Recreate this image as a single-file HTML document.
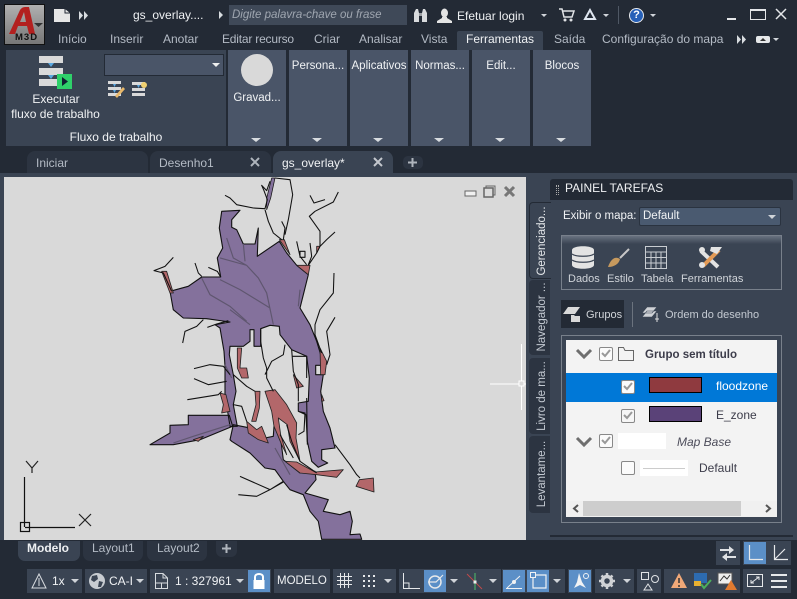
<!DOCTYPE html>
<html><head><meta charset="utf-8"><style>
html,body{margin:0;padding:0;width:797px;height:599px;overflow:hidden;background:#232a35}
body{position:relative;font-family:"Liberation Sans","DejaVu Sans",sans-serif;font-size:12px;color:#f0f2f4}
div{position:absolute;box-sizing:border-box}
.t{white-space:nowrap;line-height:16px;height:16px}
.g{color:#b4bbc5}
.m{left:0;top:0;width:797px;height:599px;background:#84719c}
.p{background:#4a5568;top:50px;height:96px;width:58px;text-align:center;font-size:11.5px}
.p .l{position:absolute;left:0;right:0;top:8px;line-height:16px;white-space:nowrap}
.p i{position:absolute;left:23px;bottom:4px;width:0;height:0;border-left:5px solid transparent;border-right:5px solid transparent;border-top:4px solid #d8dce0}
.s{background:#3a4453;top:569px;height:24px}
.b{background:#5b8fc7;top:570px;height:22px;width:22px}
svg{position:absolute;overflow:visible}
.a{position:absolute;width:0;height:0;border-left:4px solid transparent;border-right:4px solid transparent;border-top:4px solid #d0d4d9}
.v{transform:rotate(-90deg);transform-origin:center;text-align:center;width:78px;height:16px;line-height:16px;white-space:nowrap;color:#c4cad2;font-size:11.5px}
</style></head><body>

<!-- top chrome -->
<div style="left:4px;top:4px;width:41px;height:41px;background:linear-gradient(#b0b0b0,#777);border:1px solid #111"></div>
<svg style="left:4px;top:4px" width="41" height="41" viewBox="0 0 41 41"><path d="M5 30 L16 6 Q18 3 21 3 H25 L31 30 H25 L23 22 H14 L11 30 Z M16 18 H22 L20 8 Z" fill="#b3201f" fill-rule="evenodd"/><path d="M30 19 h9 l-4.500 4z" fill="#333"/></svg>
<div class="t" style="left:15px;top:31px;font-weight:bold;font-size:9.500px;color:#111;letter-spacing:1px;line-height:14px;height:14px">M3D</div>
<svg style="left:54px;top:9px" width="16" height="13"><path d="M0 0H11L16 4V13H0Z" fill="#e6e6e6"/><path d="M11 0V4H16" fill="none" stroke="#232a35"/></svg>
<svg style="left:79px;top:11px" width="10" height="9"><path d="M0 0L4 4.500 0 9ZM5 0L9 4.500 5 9Z" fill="#d8dce0"/></svg>
<div class="t" style="left:133px;top:7px">gs_overlay....</div>
<svg style="left:219px;top:11px" width="4" height="8"><path d="M0 0L4 4 0 8Z" fill="#d8dce0"/></svg>
<div style="left:229px;top:5px;width:178px;height:20px;background:#3f4958"></div>
<div class="t" style="left:232px;top:7px;font-style:italic;color:#a0a7b1;font-size:11.500px">Digite palavra-chave ou frase</div>
<svg style="left:413px;top:8px" width="15" height="15"><path d="M1 5L3 1H5L6 5V14H1ZM14 5L12 1H10L9 5V14H14Z" fill="#d9dbdd"/><rect x="6" y="5" width="3" height="3" fill="#9a9da1"/></svg>
<svg style="left:437px;top:8px" width="15" height="15"><ellipse cx="7.500" cy="5" rx="3.500" ry="4.500" fill="#e4e4e4"/><path d="M5 9h5v1l5 3v2H0v-2l5-3z" fill="#e4e4e4"/></svg>
<div class="t" style="left:457px;top:8px;color:#eef0f2">Efetuar login</div>
<div class="a" style="left:541px;top:14px;border-left-width:3px;border-right-width:3px;border-top-width:3px"></div>
<svg style="left:559px;top:8px" width="16" height="14"><path d="M0 1h3l2 8h8l2-6H4" fill="none" stroke="#e0e2e5" stroke-width="1.500"/><circle cx="6" cy="12" r="1.500" fill="#e0e2e5"/><circle cx="12" cy="12" r="1.500" fill="#e0e2e5"/></svg>
<svg style="left:583px;top:8px" width="14" height="13"><path d="M7 2L2 11H12Z" fill="none" stroke="#dfe6f0" stroke-width="2"/></svg>
<div class="a" style="left:603px;top:14px;border-left-width:3px;border-right-width:3px;border-top-width:3px"></div>
<div style="left:618px;top:6px;width:1px;height:18px;background:#4f5865"></div>
<div style="left:629px;top:8px;width:15px;height:15px;border-radius:50%;background:#e8eaed"></div>
<div style="left:630px;top:9px;width:13px;height:13px;border-radius:50%;background:#2660b8;color:#fff;font-weight:bold;text-align:center;line-height:13px;font-size:11px">?</div>
<div class="a" style="left:650px;top:14px;border-left-width:3px;border-right-width:3px;border-top-width:3px"></div>
<div style="left:727px;top:18px;width:9px;height:2px;background:#e4e6e9"></div>
<div style="left:750px;top:9px;width:16px;height:11px;border:1px solid #e4e6e9;border-top-width:2px"></div>
<svg style="left:775px;top:8px" width="12" height="12"><path d="M1 1L11 11M11 1L1 11" stroke="#e4e6e9" stroke-width="1.500"/></svg>

<!-- tabs -->
<div class="t g" style="left:58px;top:31px">Início</div>
<div class="t g" style="left:110px;top:31px">Inserir</div>
<div class="t g" style="left:163px;top:31px">Anotar</div>
<div class="t g" style="left:222px;top:31px;letter-spacing:-.2px">Editar recurso</div>
<div class="t g" style="left:314px;top:31px">Criar</div>
<div class="t g" style="left:359px;top:31px">Analisar</div>
<div class="t g" style="left:421px;top:31px">Vista</div>
<div style="left:457px;top:31px;width:86px;height:19px;background:#3a4453;border-radius:2px 2px 0 0"></div>
<div class="t" style="left:466px;top:31px">Ferramentas</div>
<div class="t g" style="left:554px;top:31px">Saída</div>
<div class="t g" style="left:602px;top:31px">Configuração do mapa</div>
<svg style="left:737px;top:35px" width="10" height="9"><path d="M0 0L4 4.500 0 9ZM5 0L9 4.500 5 9Z" fill="#d8dce0"/></svg>
<div style="left:756px;top:36px;width:14px;height:7px;background:#e6e8ea;border-radius:2px"></div>
<svg style="left:760px;top:37px" width="6" height="4"><path d="M0 4L3 1 6 4Z" fill="#333"/></svg>
<div class="a" style="left:773px;top:38px;border-left-width:3px;border-right-width:3px;border-top-width:3px"></div>

<!-- ribbon -->
<div style="left:6px;top:50px;width:220px;height:96px;background:#3a4453"></div>
<svg style="left:39px;top:56px" width="33" height="33"><path d="M0 0h24v7H0zM0 12h24v7H0zM0 23h24v7H0z" fill="#d9d9d9"/><path d="M9 7h6l-3 4zM9 19h6l-3 4z" fill="#5aa7e0"/><rect x="18" y="18" width="15" height="15" fill="#2fd16a"/><path d="M23 21l6 4.500-6 4.500z" fill="#123"/></svg>
<div class="t" style="left:0;top:91px;width:112px;text-align:center">Executar</div>
<div class="t" style="left:0;top:106px;width:111px;text-align:center">fluxo de trabalho</div>
<div class="t" style="left:6px;top:129px;width:220px;text-align:center">Fluxo de trabalho</div>
<div style="left:104px;top:54px;width:120px;height:22px;background:#4a5568;border:1px solid #232a35"></div>
<div class="a" style="left:212px;top:63px;border-top-color:#eee"></div>
<svg style="left:108px;top:81px" width="18" height="17"><path d="M0 0h13v3H0zM0 6h13v3H0zM0 12h13v3H0z" fill="#d9d9d9"/><path d="M5 3h3l-1.500 3zM5 9h3l-1.500 3z" fill="#5aa7e0"/><path d="M7 15L15 6l2 2-8 9z" fill="#e8b86a"/></svg>
<svg style="left:132px;top:81px" width="18" height="16"><path d="M0 1h13v3H0zM0 7h13v3H0zM0 12h13v3H0z" fill="#d9d9d9"/><path d="M5 4h3l-1.500 3z" fill="#5aa7e0"/><circle cx="12" cy="4" r="3" fill="#f0d070"/></svg>
<div class="p" style="left:228px"><div style="left:13px;top:4px;width:32px;height:32px;border-radius:50%;background:#d9d9d9"></div><div class="l" style="top:40px">Gravad...</div><i></i></div>
<div class="p" style="left:289px"><div class="l">Persona...</div><i></i></div>
<div class="p" style="left:350px"><div class="l">Aplicativos</div><i></i></div>
<div class="p" style="left:411px"><div class="l">Normas...</div><i></i></div>
<div class="p" style="left:472px"><div class="l">Edit...</div><i></i></div>
<div class="p" style="left:533px"><div class="l">Blocos</div><i></i></div>

<!-- doc tabs -->
<div style="left:27px;top:151px;width:121px;height:24px;background:#2c3441;border-radius:8px 8px 0 0"></div>
<div class="t g" style="left:36px;top:155px">Iniciar</div>
<div style="left:150px;top:151px;width:121px;height:24px;background:#2c3441;border-radius:8px 8px 0 0"></div>
<div class="t g" style="left:159px;top:155px">Desenho1</div>
<div style="left:273px;top:151px;width:120px;height:26px;background:#3a4453;border-radius:8px 8px 0 0"></div>
<div class="t" style="left:282px;top:155px">gs_overlay*</div>
<svg style="left:250px;top:158px" width="10" height="9"><path d="M1 0L9 8M9 0L1 8" stroke="#aeb4bc" stroke-width="2"/></svg>
<svg style="left:373px;top:158px" width="10" height="9"><path d="M1 0L9 8M9 0L1 8" stroke="#c4c8ce" stroke-width="2"/></svg>
<div style="left:403px;top:156px;width:20px;height:13px;background:#2c3441;border-radius:5px"></div>
<svg style="left:408px;top:158px" width="9" height="9"><path d="M4.500 0v9M0 4.500h9" stroke="#aeb4bc" stroke-width="2"/></svg>
<div style="left:0;top:173px;width:797px;height:4px;background:#3a4453"></div>
<div style="left:0;top:177px;width:4px;height:363px;background:#3a4453"></div>

<!-- canvas -->
<div style="left:4px;top:177px;width:522px;height:363px;background:#d9d9d9"></div>
<div class="m" style="clip-path:polygon(170px 291px,188px 286px,202px 277px,221px 277px,230px 322px,206px 319px,183px 318px,173px 310px)"></div>
<div class="m" style="clip-path:polygon(229px 415px,188px 415px,188px 425px,170px 425px,170px 433px,150px 445px,173px 445px,200px 440px,233px 426px)"></div>
<div class="m" style="clip-path:polygon(222px 211px,240px 210px,232px 220px,232px 227px,237px 230px,243px 244px,255px 244px,258px 228px,257px 256px,279px 241px,287px 253px,297px 265px,308px 275px,305px 288px,300px 308px,310px 325px,317px 341px,322px 358px,323px 365px,316px 365px,316px 375px,323px 375px,321px 391px,323px 411px,330px 428px,335px 448px,322px 450px,322px 460px,328px 463px,318px 467px,312px 461px,307px 441px,306px 415px,298px 411px,298px 403px,308px 401px,309px 378px,307px 356px,292px 350px,280px 335px,279px 326px,270px 325px,261px 329px,261px 346px,254px 346px,254px 330px,250px 330px,250px 341px,243px 346px,230px 346px,229px 355px,233px 375px,236px 391px,233px 405px,237px 426px,230px 426px,225px 395px,225px 366px,224px 351px,220px 328px,215px 325px,230px 322px,207px 319px,183px 318px,173px 310px,170px 291px,188px 286px,202px 277px,221px 277px,217px 258px,223px 248px,219px 228px)"></div>
<div class="m" style="clip-path:polygon(233px 425px,247px 427px,265px 438px,273px 436px,274px 426px,279px 428px,283px 460px,300px 473px,315px 471px,316px 480px,305px 493px,328px 500px,323px 511px,340px 515px,350px 511px,352px 521px,350px 535px,360px 534px,362px 539px,322px 539px,318px 521px,310px 511px,303px 495px,290px 490px,283px 481px,275px 470px,265px 468px,250px 453px,232px 441px,230px 440px)"></div>
<svg style="left:0;top:0" width="797" height="599" viewBox="0 0 797 599">
<g stroke="#111" stroke-width="1.100" fill="none" stroke-linejoin="round">
<polygon points="221.7,211.3 240,210.3 231.7,219.7 231.7,227.3 236.7,229.7 243.3,244 255,244 258.3,228 257.3,256.3 279.3,241.3 286.7,253 296.7,265.3 308.3,274.7 305,288 300,308 310,324.7 316.7,341.3 321.7,358 323.3,365.3 315.7,365.3 315.7,374.7 323.3,374.7 320.7,391.3 323.3,411.3 330,428 335,448 321.7,449.7 321.7,459.7 327.7,463 318.3,467.3 311.7,461.3 307.3,441.3 306,414.7 298.3,411.3 298.3,403 308.3,401.3 309.3,378 306.7,356.3 291.7,349.7 280,334.7 279.3,326.3 270,325.3 260.7,328.7 260.7,346.3 254,346.3 254,329.7 250,329.7 250,341.3 243.3,346.3 230,346.3 229.3,354.7 233.3,374.7 236,391.3 233.3,404.7 237.3,426.3 230,426.3 225,394.7 225,366.3 224,351.3 220,328 215,324.7 230,322 206.7,318.7 183.3,318 173.3,309.7 170,291.3 188.3,286.3 201.7,277 220.7,277 217.3,258 222.7,248 219.3,228"/>
<polygon points="229.3,415.3 188.3,415.3 188.3,424.7 170,425.3 170,433 150,444.7 173.3,444.7 200,439.7 232.7,426.3"/>
<polygon points="233.3,424.7 246.7,427.3 265,438 273.3,436.3 274,426.3 279.3,428 283.3,459.7 300,473 315,471.3 316,479.7 305,493 328.3,499.7 323.3,511.3 340,514.7 350,511.3 352.3,521.3 350,534.7 360,534 361.7,539.3 321.7,539.3 318.3,521.3 310,511.3 303.3,494.7 290,489.7 283.3,481.3 275,469.7 265,468 250,453 231.7,441.3 230,439.7"/>
<polygon points="266.7,198 271.7,178 275,178 270.7,198 266.7,209.7" fill="#84719c" stroke-width=".7"/>
</g>
<g transform="translate(150,178) scale(.33333)">
<g fill="none" stroke="#5f566f" stroke-width="3.500">
<path d="M155 300 180 350 240 385 290 430M210 240 290 262 325 300 350 345 370 440M230 180 250 240 290 262M210 305 270 335 360 390M280 198 285 250M240 395 300 440M375 810 420 890M450 335 445 385M225 560 245 600M70 795 130 775 240 740"/>
</g>
<g fill="#b3676a" stroke="#222" stroke-width="2.500" stroke-linejoin="round">
<path d="M345 640 375 635 410 680 440 735 438 780 450 850 420 790 412 740 385 720 392 770 410 830 395 800 372 745 365 700Z"/>
<path d="M290 730 320 755 335 745 355 795 325 785 295 765Z"/>
<path d="M405 850 440 852 495 882 580 875 560 898 500 890 450 885Z"/>
<path d="M670 900 672 942 618 925 628 905Z"/>
<path d="M315 640 330 640 328 690 318 730 305 730 318 680Z"/>
<path d="M262 510 275 510 270 570 290 570 295 600 275 600 262 570Z"/>
<path d="M210 645 228 650 240 700 215 705 220 680Z"/>
<path d="M130 785 160 775 145 790Z"/>
<path d="M440 262 480 262 475 290ZM388 185 403 185 420 230ZM500 205 510 205 500 225ZM35 280 50 280 70 345 60 345ZM510 510 530 550 525 590 512 590ZM515 650 522 668 515 670ZM430 590 460 625 440 630Z"/>
</g>
<g fill="none" stroke="#111" stroke-width="3.200" stroke-linejoin="round">
<path d="M225 52 240 60 260 80 310 90 345 92 352 65 342 38 335 22 350 38 360 10M345 95 355 130 370 165 395 185M395 130 405 150 400 185M375 0 420 5 428 50 415 125 405 170"/>
<path d="M565 42 550 72 495 100M480 52 492 75 525 65M495 100 478 115 510 160 510 205 500 225 475 262M555 162 530 185 510 205M440 190 450 235 470 260M480 195 485 235 475 260M450 220h15v18h-15z"/>
<path d="M552 285 550 345 510 395 495 440 495 470 515 525M555 418 530 460 540 530 530 560"/>
<path d="M70 238 45 265 12 278 40 285 65 340M135 255 145 285 155 295M175 268 202 280 212 297M98 495 105 460 140 445 160 425M172 448 200 438 235 428"/>
<path d="M332 452 332 490 340 540 350 570 350 600 370 640M345 590 365 550 400 530 405 500M425 515 430 580 445 620 445 670M425 535H470V600"/>
<path d="M132 572 180 560 220 565 240 590M132 602 175 620 230 610M112 665 205 650 215 640"/>
<path d="M270 895 360 935 400 912M265 950 320 955 360 935 400 910"/>
<path d="M250 590 290 625 315 640M250 680 275 685 290 730M410 740 425 790 450 850 500 885M390 770 430 840M445 700 465 705 462 760 445 770"/>
<path d="M555 800 600 860 620 890 630 900M470 660 472 800"/>
</g>
</g>
<!-- UCS -->
<path d="M24.500 477V527M25 527.500H75" stroke="#111" stroke-width="1.200" fill="none"/>
<rect x="20.500" y="522.500" width="9" height="9" fill="none" stroke="#111" stroke-width="1.200"/>
<path d="M26 461L32 468 38 461M32 468V473M79 514L91 526M91 514L79 526" stroke="#222" stroke-width="1.200" fill="none"/>
<!-- crosshair -->
<path d="M490 384H526M521.500 344V410" stroke="#fff" stroke-width="1"/>
<rect x="519" y="381" width="5" height="5" fill="#d9d9d9" stroke="#fff"/>
<!-- vp controls -->
<rect x="465" y="191" width="11" height="5" fill="#f0f0f0" stroke="#666"/>
<rect x="486" y="186" width="9" height="9" fill="none" stroke="#666"/><rect x="484" y="188" width="9" height="9" fill="#ddd" stroke="#666" stroke-width="1.500"/>
<path d="M505 187L514 196M514 187L505 196" stroke="#777" stroke-width="3"/>
</svg>

<!-- right panel -->
<div style="left:526px;top:177px;width:271px;height:363px;background:#3a4453"></div>
<div style="left:550px;top:179px;width:243px;height:21px;background:#232a35;border-radius:3px 3px 0 0"></div>
<div class="t" style="left:565px;top:180px">PAINEL TAREFAS</div>
<div style="left:556px;top:185px;width:3px;height:10px;border-left:1px dotted #aaa;border-right:1px dotted #aaa"></div>
<div style="left:529px;top:202px;width:22px;height:77px;background:#3a4453;border:1px solid #232a35;border-right:0;border-radius:4px 0 0 4px"></div>
<div style="left:529px;top:280px;width:21px;height:75px;background:#2c3441;border-radius:4px 0 0 4px"></div>
<div style="left:529px;top:358px;width:21px;height:76px;background:#2c3441;border-radius:4px 0 0 4px"></div>
<div style="left:529px;top:436px;width:21px;height:77px;background:#2c3441;border-radius:4px 0 0 4px"></div>
<div class="v" style="left:503px;top:233px;color:#e6e9ec">Gerenciado...</div>
<div class="v" style="left:503px;top:309px">Navegador ...</div>
<div class="v" style="left:503px;top:388px">Livro de ma...</div>
<div class="v" style="left:503px;top:466px">Levantame...</div>
<div class="t" style="left:563px;top:208px;font-size:11.500px">Exibir o mapa:</div>
<div style="left:639px;top:207px;width:142px;height:19px;background:#4a5a70;border:1px solid #2a3340;border-radius:2px"></div>
<div class="t" style="left:643px;top:208px;font-size:11.500px">Default</div>
<div class="a" style="left:768px;top:215px"></div>
<div style="left:561px;top:235px;width:221px;height:55px;border:1px solid #78808b;background:linear-gradient(#697280 0,#3a4453 8px)"></div>
<svg style="left:572px;top:246px" width="22" height="23"><path d="M0 4C0 -1 22 -1 22 4V19C22 24 0 24 0 19Z" fill="#e3e3e3"/><path d="M0 8C4 11 18 11 22 8M0 14C4 17 18 17 22 14" stroke="#3a4453" fill="none" stroke-width="1.200"/></svg>
<svg style="left:608px;top:248px" width="22" height="20"><path d="M0 19C3 10 8 8 12 11C11 16 6 19 0 19Z" fill="#c79a5e"/><path d="M12 10L21 1" stroke="#c8c8c8" stroke-width="2"/></svg>
<svg style="left:645px;top:246px" width="22" height="23"><path d="M.5 .5H21.500V22.500H.5ZM.5 6H21.500M.5 11.500H21.500M.5 17H21.500M6 6V22.500M11 6V22.500M16 6V22.500" fill="none" stroke="#c8ccd1"/></svg>
<svg style="left:697px;top:246px" width="26" height="23"><path d="M4 5L21 21" stroke="#e3e3e3" stroke-width="4"/><path d="M22 4L6 20" stroke="#e39a55" stroke-width="4"/><path d="M14 1L25 1 20 8 13 5Z" fill="#e3e3e3"/><circle cx="5" cy="19" r="3" fill="#e3e3e3"/><circle cx="5" cy="4" r="3" fill="#e3e3e3"/></svg>
<div class="t" style="left:568px;top:271px;color:#d0d4d9;font-size:11px">Dados</div>
<div class="t" style="left:607px;top:271px;color:#d0d4d9;font-size:11px">Estilo</div>
<div class="t" style="left:641px;top:271px;color:#d0d4d9;font-size:11px">Tabela</div>
<div class="t" style="left:681px;top:271px;color:#d0d4d9;font-size:11px">Ferramentas</div>
<div style="left:561px;top:300px;width:63px;height:28px;background:#232a35"></div>
<svg style="left:563px;top:307px" width="18" height="15"><path d="M5 0H17L12 7H0Z" fill="#d9d9d9"/><path d="M8 8h3l1 1h5v6H8z" fill="#d9d9d9"/></svg>
<div class="t" style="left:586px;top:307px;color:#d0d4d9;font-size:11px">Grupos</div>
<div style="left:632px;top:302px;width:1px;height:25px;background:#6b737e"></div>
<svg style="left:642px;top:307px" width="18" height="16"><path d="M5 0H15L10 6H0ZM5 4H15L10 10H0Z" fill="#cfd2d6" stroke="#3a4453" stroke-width=".6"/><path d="M15 6V15M13 12H17" stroke="#e0e0e0"/></svg>
<div class="t" style="left:665px;top:307px;color:#c4cad2;font-size:11px">Ordem do desenho</div>

<div style="left:561px;top:335px;width:221px;height:188px;border:1px solid #78808b"></div>
<div style="left:566px;top:340px;width:211px;height:177px;background:#f3f3f3"></div>
<svg style="left:576px;top:349px" width="16" height="10"><path d="M1 1L8 8 15 1" fill="none" stroke="#6e6e6e" stroke-width="3"/></svg>
<svg style="left:576px;top:437px" width="16" height="10"><path d="M1 1L8 8 15 1" fill="none" stroke="#6e6e6e" stroke-width="3"/></svg>
<div style="left:599px;top:347px;width:14px;height:14px;border:1px solid #888;border-radius:2px;background:#fbfbfb"></div>
<div style="left:599px;top:434px;width:14px;height:14px;border:1px solid #888;border-radius:2px;background:#fbfbfb"></div>
<svg style="left:618px;top:347px" width="17" height="14"><path d="M.5 2.500V13.500H15.500V3.500H7L5.500 .5H.5Z" fill="none" stroke="#666"/></svg>
<svg style="left:601px;top:349px" width="10" height="9"><path d="M1 4L4 7 9 1" fill="none" stroke="#999" stroke-width="2"/></svg>
<svg style="left:601px;top:436px" width="10" height="9"><path d="M1 4L4 7 9 1" fill="none" stroke="#999" stroke-width="2"/></svg>
<div class="t" style="left:645px;top:347px;font-weight:bold;color:#3c3c4a;font-size:11.500px">Grupo sem título</div>
<div style="left:566px;top:373px;width:211px;height:29px;background:#0078d7"></div>
<div style="left:621px;top:380px;width:14px;height:14px;border:1px solid #888;border-radius:2px;background:#fbfbfb"></div>
<svg style="left:623px;top:382px" width="10" height="9"><path d="M1 4L4 7 9 1" fill="none" stroke="#999" stroke-width="2"/></svg>
<div style="left:649px;top:377px;width:53px;height:16px;background:#8f3a3f;border:1px solid #000"></div>
<div class="t" style="left:716px;top:378px;color:#fff">floodzone</div>
<div style="left:621px;top:409px;width:14px;height:14px;border:1px solid #888;border-radius:2px;background:#f6f6f6"></div>
<svg style="left:623px;top:411px" width="10" height="9"><path d="M1 4L4 7 9 1" fill="none" stroke="#999" stroke-width="2"/></svg>
<div style="left:649px;top:406px;width:53px;height:16px;background:#5a4278;border:1px solid #000"></div>
<div class="t" style="left:716px;top:407px;color:#3c3c4a">E_zone</div>
<div style="left:618px;top:433px;width:48px;height:16px;background:#fff"></div>
<div class="t" style="left:677px;top:434px;font-style:italic;color:#4c4c5a">Map Base</div>
<div style="left:621px;top:461px;width:14px;height:14px;border:1px solid #888;border-radius:2px;background:#fbfbfb"></div>
<div style="left:640px;top:460px;width:48px;height:16px;background:#fff"></div>
<div style="left:643px;top:468px;width:42px;height:1px;background:#ccc"></div>
<div class="t" style="left:699px;top:460px;color:#3c3c4a">Default</div>
<div style="left:566px;top:501px;width:211px;height:16px;background:#f0f0f0"></div>
<div style="left:583px;top:501px;width:158px;height:15px;background:#cdcdcd"></div>
<svg style="left:572px;top:504px" width="7" height="9"><path d="M6 1L2 4.500 6 8" fill="none" stroke="#555" stroke-width="2"/></svg>
<svg style="left:765px;top:504px" width="7" height="9"><path d="M1 1L5 4.500 1 8" fill="none" stroke="#555" stroke-width="2"/></svg>
<div style="left:550px;top:535px;width:243px;height:2px;background:#232a35"></div>

<!-- layout tabs -->
<div style="left:0;top:540px;width:797px;height:59px;background:#232a35"></div>
<div style="left:18px;top:541px;width:62px;height:20px;background:#3a4453;border-radius:0 0 7px 7px"></div>
<div class="t" style="left:27px;top:540px;font-weight:bold;color:#eef0f2">Modelo</div>
<div style="left:83px;top:541px;width:60px;height:20px;background:#2c3441;border-radius:0 0 7px 7px"></div>
<div class="t g" style="left:92px;top:540px">Layout1</div>
<div style="left:147px;top:541px;width:60px;height:20px;background:#2c3441;border-radius:0 0 7px 7px"></div>
<div class="t g" style="left:157px;top:540px">Layout2</div>
<div style="left:216px;top:541px;width:21px;height:16px;background:#2c3441;border-radius:0 0 6px 6px"></div>
<svg style="left:222px;top:544px" width="9" height="9"><path d="M4.500 0v9M0 4.500h9" stroke="#aeb4bc" stroke-width="2"/></svg>

<!-- status top right -->
<div class="s" style="left:716px;top:541px;width:24px"></div>
<svg style="left:720px;top:545px" width="16" height="16"><path d="M0 4h9V1l5 4-5 4V6H0zM16 11H7V8l-5 4 5 4v-3h9z" fill="#e0e2e5"/></svg>
<div class="s" style="left:743px;top:541px;width:48px"></div>
<div class="b" style="left:744px;top:542px"></div>
<svg style="left:747px;top:545px" width="16" height="16"><path d="M2.500 0V14.500H16" fill="none" stroke="#e6e8ea" stroke-width="1.200"/></svg>
<svg style="left:772px;top:545px" width="16" height="16"><path d="M2.500 0V14.500H16M2.500 14.500L13 4" fill="none" stroke="#e6e8ea" stroke-width="1.200"/></svg>

<!-- status bar -->
<div class="s" style="left:27px;width:55px"></div>
<svg style="left:31px;top:573px" width="16" height="16"><path d="M8 1L15 15H1Z" fill="none" stroke="#d8dce0"/><path d="M8 5V13" stroke="#d8dce0"/></svg>
<div class="t" style="left:52px;top:573px">1x</div>
<div class="a" style="left:71px;top:579px"></div>
<div class="s" style="left:85px;width:62px"></div>
<div style="left:89px;top:573px;width:16px;height:16px;border-radius:50%;background:#c8ccd1"></div>
<svg style="left:89px;top:573px" width="16" height="16"><path d="M3 3L8 2 9 6 5 9 2 7ZM10 8L14 9 12 14 9 14Z" fill="#3a4453"/></svg>
<div class="t" style="left:109px;top:573px">CA-I</div>
<div class="a" style="left:136px;top:579px"></div>
<div class="s" style="left:150px;width:121px"></div>
<svg style="left:155px;top:573px" width="13" height="16"><path d="M.5 .5H8L12.500 5V15.500H.5ZM8 .5V5H12.500M.5 10H12.500M6.500 10V15.500" fill="none" stroke="#d8dce0"/></svg>
<div class="t" style="left:175px;top:573px">1 : 327961</div>
<div class="a" style="left:236px;top:579px"></div>
<div class="b" style="left:248px"></div>
<svg style="left:252px;top:573px" width="14" height="16"><path d="M3 8V4C3 0 11 0 11 4V8" fill="none" stroke="#fff" stroke-width="2"/><rect x="1.500" y="7" width="11" height="9" fill="#fff"/></svg>
<div class="s" style="left:274px;width:56px"></div>
<div class="t" style="left:277px;top:573px;font-size:11.500px">MODELO</div>
<div class="s" style="left:333px;width:63px"></div>
<svg style="left:337px;top:573px" width="15" height="15"><path d="M3.500 0V15M7.500 0V15M11.500 0V15M0 3.500H15M0 7.500H15M0 11.500H15" stroke="#e6e8ea"/></svg>
<svg style="left:362px;top:574px" width="13" height="13"><path d="M1 1h2v2H1zM6 1h2v2H6zM11 1h2v2h-2zM1 6h2v2H1zM6 6h2v2H6zM11 6h2v2h-2zM1 11h2v2H1zM6 11h2v2H6zM11 11h2v2h-2z" fill="#e6e8ea"/></svg>
<div class="a" style="left:384px;top:579px"></div>

<div class="s" style="left:399px;width:102px"></div>
<svg style="left:403px;top:573px" width="17" height="16"><path d="M.5 0V15.500H17M.5 10H6V15.500" fill="none" stroke="#e6e8ea"/></svg>
<div class="b" style="left:424px"></div>
<svg style="left:427px;top:573px" width="17" height="16"><circle cx="8" cy="9" r="6" fill="none" stroke="#e6e8ea" stroke-width="1.500"/><path d="M1 9H9L16 2" fill="none" stroke="#e6e8ea" stroke-width="1.200"/></svg>
<div class="a" style="left:450px;top:579px"></div>
<svg style="left:466px;top:573px" width="17" height="17"><path d="M1 1L16 16" stroke="#c24a4a"/><path d="M9 0V17" stroke="#4fc06a"/><rect x="7.500" y="7.500" width="3" height="3" fill="#eee"/></svg>
<div class="a" style="left:489px;top:579px"></div>
<div class="s" style="left:502px;width:63px"></div>
<div class="b" style="left:503px"></div>
<svg style="left:506px;top:574px" width="17" height="15"><path d="M0 14.500H16M1 14L14 2" fill="none" stroke="#f0f2f4"/><circle cx="8" cy="8" r="2" fill="#f0f2f4"/></svg>
<div class="b" style="left:527px"></div>
<svg style="left:530px;top:572px" width="18" height="18"><path d="M3 3H16V16H3Z" fill="none" stroke="#f0f2f4" stroke-width="1.200"/><rect x=".5" y=".5" width="5" height="5" fill="#5b8fc7" stroke="#f0f2f4"/></svg>
<div class="a" style="left:553px;top:579px"></div>
<div class="s" style="left:568px;width:24px"></div>
<div class="b" style="left:569px"></div>
<svg style="left:571px;top:572px" width="19" height="18"><path d="M8 1L11 10 15 16 9 13 3 16 6 10Z" fill="#f0f2f4"/><circle cx="15" cy="4" r="2.500" fill="none" stroke="#f0f2f4"/></svg>
<div class="s" style="left:595px;width:39px"></div>
<svg style="left:599px;top:573px" width="16" height="16"><circle cx="8" cy="8" r="4.500" fill="none" stroke="#d0d2d5" stroke-width="3.500"/><path d="M8 0V3M8 13V16M0 8H3M13 8H16M2.500 2.500L4.500 4.500M11.500 11.500L13.500 13.500M13.500 2.500L11.500 4.500M4.500 11.500L2.500 13.500" stroke="#d0d2d5" stroke-width="2.500"/></svg>
<div class="a" style="left:623px;top:579px"></div>
<div class="s" style="left:637px;width:24px"></div>
<svg style="left:641px;top:572px" width="18" height="19"><rect x=".5" y=".5" width="7" height="7" fill="none" stroke="#e0e2e5"/><circle cx="14" cy="7" r="3.500" fill="none" stroke="#e0e2e5"/><path d="M7 12L11 18H3Z" fill="none" stroke="#e0e2e5"/></svg>
<div class="s" style="left:664px;width:76px"></div>
<svg style="left:671px;top:572px" width="16" height="17"><path d="M8 1L16 16H0Z" fill="#f0a878"/><path d="M8 6V11M8 13V15" stroke="#333" stroke-width="1.500"/></svg>
<svg style="left:693px;top:572px" width="20" height="18"><rect x="1" y="1" width="13" height="10" fill="#2d6bb0"/><rect x="1" y="9" width="7" height="5" fill="#e8b030"/><path d="M8 12L11 16 18 8" fill="none" stroke="#4cae5c" stroke-width="2"/></svg>
<svg style="left:717px;top:572px" width="20" height="18"><rect x="1" y="1" width="14" height="11" fill="#eee" stroke="#555"/><path d="M3 9L7 4 10 7 13 3" stroke="#333" fill="none"/><path d="M14 8L20 18H8Z" fill="#e07a30"/></svg>
<div class="s" style="left:743px;width:48px"></div>
<svg style="left:747px;top:574px" width="16" height="13"><rect x=".5" y=".5" width="15" height="12" fill="none" stroke="#e6e8ea"/><path d="M4 9L12 3M9 3H12V6M4 6V9H7" fill="none" stroke="#e6e8ea"/></svg>
<div style="left:771px;top:574px;width:16px;height:2px;background:#e6e8ea"></div>
<div style="left:771px;top:580px;width:16px;height:2px;background:#e6e8ea"></div>
<div style="left:771px;top:586px;width:16px;height:2px;background:#e6e8ea"></div>
</body></html>
